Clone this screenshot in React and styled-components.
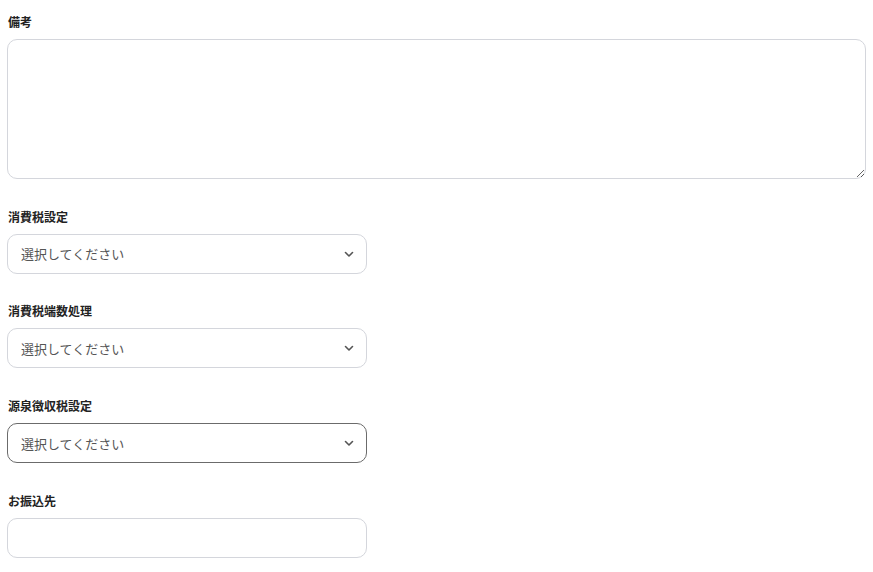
import React from "react";
import styled, { createGlobalStyle } from "styled-components";

const GlobalStyle = createGlobalStyle`
  html, body {
    margin: 0;
    padding: 0;
    background: #fff;
  }
  body {
    font-family: "Noto Sans CJK JP", "Liberation Sans", sans-serif;
    color: #222;
  }
`;

const Form = styled.div`
  padding: 13px 7px 14px 7px;
  display: flex;
  flex-direction: column;
  gap: 28.7px;
`;

const Field = styled.div`
  display: flex;
  flex-direction: column;
  gap: 8px;
`;

const Label = styled.label`
  font-size: 12px;
  line-height: 18px;
  font-weight: 700;
  color: #222;
  padding-left: 1px;
`;

const TextArea = styled.textarea`
  box-sizing: border-box;
  width: 100%;
  height: 140px;
  border: 1px solid #d4d6dc;
  border-radius: 10px;
  font-family: inherit;
  font-size: 13px;
  padding: 10px 13px;
  outline: none;
  resize: vertical;
  display: block;
`;

const SelectBox = styled.div`
  box-sizing: border-box;
  width: 360px;
  height: 40px;
  border: 1px solid ${(p) => (p.$focused ? "#6b6b6b" : "#d4d6dc")};
  border-radius: 10px;
  display: flex;
  align-items: center;
  justify-content: space-between;
  padding: 0 10px 0 13px;
  background: #fff;
`;

const Placeholder = styled.span`
  font-size: 13px;
  color: #555;
`;

const Input = styled.input`
  box-sizing: border-box;
  width: 360px;
  height: 40px;
  border: 1px solid #d4d6dc;
  border-radius: 10px;
  font-family: inherit;
  font-size: 13px;
  padding: 0 13px;
  outline: none;
  display: block;
`;

const Chevron = () => (
  <svg width="14" height="14" viewBox="0 0 14 14" fill="none">
    <path
      d="M3.5 5.5 L7 9 L10.5 5.5"
      stroke="#555"
      strokeWidth="1.6"
      strokeLinecap="round"
      strokeLinejoin="round"
    />
  </svg>
);

const Select = ({ focused }) => (
  <SelectBox $focused={focused}>
    <Placeholder>選択してください</Placeholder>
    <Chevron />
  </SelectBox>
);

export default function App() {
  return (
    <>
      <GlobalStyle />
      <Form>
        <Field>
          <Label>備考</Label>
          <TextArea />
        </Field>
        <Field>
          <Label>消費税設定</Label>
          <Select />
        </Field>
        <Field>
          <Label>消費税端数処理</Label>
          <Select />
        </Field>
        <Field>
          <Label>源泉徴収税設定</Label>
          <Select focused />
        </Field>
        <Field>
          <Label>お振込先</Label>
          <Input />
        </Field>
      </Form>
    </>
  );
}
